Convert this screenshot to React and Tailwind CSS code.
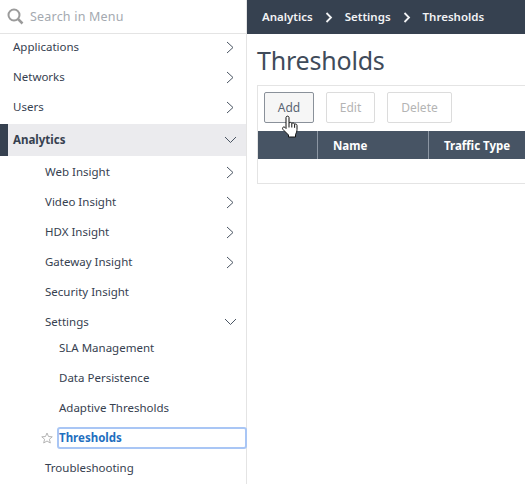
import React from 'react';

const font = "font-['Noto_Sans','Open_Sans',sans-serif]";

const ChevronRight = () => (
  <svg width="8" height="13" viewBox="0 0 8 13" fill="none" className="shrink-0">
    <path d="M1 1l6 5.500L1 12" stroke="#4a5563" strokeWidth="1" />
  </svg>
);

const ChevronDown = () => (
  <svg width="13" height="8" viewBox="0 0 13 8" fill="none" className="shrink-0">
    <path d="M1 1l5.500 5.500L12 1" stroke="#4a5563" strokeWidth="1" />
  </svg>
);

const Crumb = () => (
  <svg width="8" height="11" viewBox="0 0 8 11" fill="none" className="mx-[12px] shrink-0">
    <path d="M1.500 1l4.500 4.500L1.500 10" stroke="#f2f3f5" strokeWidth="1.800" />
  </svg>
);

const MenuRow = ({ label, right, className = 'pr-[12px]' }) => (
  <div className={`flex h-[30px] items-center justify-between text-[11.5px] text-[#364150] ${className}`}>
    <span>{label}</span>
    {right}
  </div>
);

const App = () => {
  return (
    <div className={`flex h-[484px] w-[525px] overflow-hidden bg-white ${font}`}>
      <aside className="flex w-[247px] shrink-0 flex-col border-r border-[#e4e4e4]">
        <div className="flex h-[34px] shrink-0 items-center gap-[6px] border-b border-[#e4e4e4] pl-[7px]">
          <svg width="17" height="17" viewBox="0 0 17 17" fill="none">
            <circle cx="7" cy="7" r="5.500" stroke="#9b9b9b" strokeWidth="2" />
            <path d="M11 11l4.500 4.500" stroke="#9b9b9b" strokeWidth="2.500" />
          </svg>
          <span className="pt-[1px] text-[12.5px] tracking-[0.2px] text-[#a4a9b0]">Search in Menu</span>
        </div>
        <div className="-mt-[2px] pl-[13px]">
          <MenuRow label="Applications" right={<ChevronRight />} />
          <MenuRow label="Networks" right={<ChevronRight />} />
          <MenuRow label="Users" right={<ChevronRight />} />
        </div>
        <div className="mt-[2px] flex h-[32px] items-center justify-between border-l-[8px] border-[#364150] bg-[#ebebee] pl-[5px] pr-[9px] text-[11.5px] font-bold text-[#364150]">
          <span>Analytics</span>
          <ChevronDown />
        </div>
        <div className="mt-[1px] pl-[45px]">
          <MenuRow label="Web Insight" right={<ChevronRight />} />
          <MenuRow label="Video Insight" right={<ChevronRight />} />
          <MenuRow label="HDX Insight" right={<ChevronRight />} />
          <MenuRow label="Gateway Insight" right={<ChevronRight />} />
          <MenuRow label="Security Insight" />
          <MenuRow label="Settings" right={<ChevronDown />} className="pr-[9px]" />
        </div>
        <div className="-mt-[4px] pl-[59px]">
          <MenuRow label="SLA Management" />
          <MenuRow label="Data Persistence" />
          <MenuRow label="Adaptive Thresholds" />
        </div>
        <div className="flex h-[30px] items-center pl-[41px]">
          <svg width="12" height="12" viewBox="0 0 24 24" fill="none" className="mr-[4px] shrink-0">
            <path d="M12 2l3 7 7.500.6-5.700 4.900 1.800 7.500L12 18l-6.600 4 1.800-7.500L1.500 9.600 9 9z" stroke="#b5b5b5" strokeWidth="2" />
          </svg>
          <div className="-mr-px flex h-[22px] flex-1 items-center rounded-[3px] border-2 border-[#a9c6f5] text-[11.5px] font-bold text-[#1f6fc0]">
            Thresholds
          </div>
        </div>
        <div className="pl-[45px]">
          <MenuRow label="Troubleshooting" />
        </div>
      </aside>

      <main className="relative flex min-w-0 flex-1 flex-col">
        <div className="flex h-[34px] shrink-0 items-center bg-[#364150] pl-[15px] text-[11.5px] font-semibold text-[#f2f3f5]">
          <span>Analytics</span>
          <Crumb />
          <span>Settings</span>
          <Crumb />
          <span>Thresholds</span>
        </div>
        <h1 className="ml-[10px] mt-[7px] h-[44px] text-[25px] leading-[38px] tracking-[-0.2px] text-[#3f4b5a]">Thresholds</h1>
        <div className="ml-[10px] -mr-px flex h-[99px] flex-col border border-[#e4e4e4]">
          <div className="flex h-[45px] shrink-0 items-start gap-[12px] px-[6px] pt-[6px] text-[12px]">
            <button className="h-[31px] w-[50px] rounded-[2px] border border-[#8a919a] bg-[#f6f6f6] text-[#5a6573]">Add</button>
            <button className="h-[31px] w-[49px] rounded-[2px] border border-[#dcdcdc] text-[#b4b4b4]">Edit</button>
            <button className="h-[31px] w-[65px] rounded-[2px] border border-[#dcdcdc] text-[#b4b4b4]">Delete</button>
          </div>
          <div className="flex h-[28px] shrink-0 items-stretch bg-[#475464] text-[11.5px] font-bold text-white">
            <div className="w-[60px] border-r border-[#8c96a3]" />
            <div className="flex w-[111px] items-center border-r border-[#8c96a3] pl-[15px] pt-[1px]">Name</div>
            <div className="flex items-center pl-[15px] pt-[1px]">Traffic Type</div>
          </div>
        </div>
        {/* hand cursor over the Add button */}
        <svg width="20" height="25" viewBox="0 0 20 25" fill="none" className="absolute left-[34px] top-[115px]">
          <path
            d="M5 2.500c0-1.800 3-1.800 3 0V8c.8-1 2.600-.8 2.800.5.800-.9 2.600-.6 2.800.8.900-.7 2.400-.2 2.400 1.200v4c0 2-.8 3.500-1.500 5v2.500H7.500V20L2 14.500c-1.400-1.800.6-3.300 2-2l1 1z"
            fill="#fff"
            stroke="#111"
            strokeWidth="1"
          />
          <path d="M8 8v4.500M10.800 8.500v4M13.600 9.300v3.500" stroke="#111" strokeWidth="1" />
        </svg>
      </main>
    </div>
  );
};

export default App;
